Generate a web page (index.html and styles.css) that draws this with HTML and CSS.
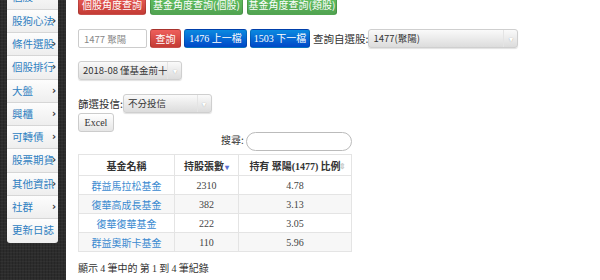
FILE: index.html
```html
<html>
<head>
<title>基金持股</title>
<link rel="stylesheet" href="styles.css">
</head>
<body>
<div class="page">
<div class="side">
<ul class="menu">
<li>個股<span class="arr">›</span></li>
<li>股狗心法<span class="arr">›</span></li>
<li>條件選股<span class="arr">›</span></li>
<li>個股排行<span class="arr">›</span></li>
<li>大盤<span class="arr">›</span></li>
<li>興櫃<span class="arr">›</span></li>
<li>可轉債<span class="arr">›</span></li>
<li>股票期貨<span class="arr">›</span></li>
<li>其他資訊<span class="arr">›</span></li>
<li>社群<span class="arr">›</span></li>
<li>更新日誌</li>
</ul>
</div>

<div class="main">
<div class="row tabs">
<a class="btn red w1">個股角度查詢</a>
<a class="btn green w2">基金角度查詢(個股)</a>
<a class="btn green w3">基金角度查詢(類股)</a>
</div>

<div class="row query">
<input class="stock" type="text" placeholder="1477 聚陽">
<a class="btn red w4">查詢</a>
<a class="btn blue w5 serif">1476 上一檔</a>
<a class="btn blue w6 serif">1503 下一檔</a>
<span class="lbl">查詢自選股:</span>
<div class="sel w7"><span class="val">1477(聚陽)</span><span class="drop">▾</span></div>
</div>

<div class="row month">
<div class="sel w8"><span class="val">2018-08 僅基金前十</span><span class="drop">▾</span></div>
</div>

<div class="row filter">
<span class="lbl">篩選投信:</span>
<div class="sel w9"><span class="val">不分投信</span><span class="drop">▾</span></div>
</div>
<div class="row"><a class="btn plain serif">Excel</a></div>

<div class="tablebox">
<div class="search">搜尋: <input type="text"></div>
<table class="funds">
<tr><th>基金名稱</th><th>持股張數<span class="sort down">▾</span></th><th>持有 聚陽<span class="serif">(1477)</span> 比例<span class="sort both">⇕</span></th></tr>
<tr><td class="name">群益馬拉松基金</td><td>2310</td><td>4.78</td></tr>
<tr class="odd"><td class="name">復華高成長基金</td><td>382</td><td>3.13</td></tr>
<tr><td class="name">復華復華基金</td><td>222</td><td>3.05</td></tr>
<tr class="odd"><td class="name">群益奧斯卡基金</td><td>110</td><td>5.96</td></tr>
</table>
<div class="info">顯示 <span class="serif">4</span> 筆中的 第 <span class="serif">1</span> 到 <span class="serif">4</span> 筆紀錄</div>
</div>
</div>
</div>
</body>
</html>
```

FILE: styles.css
```css
body{margin:0;
font-family:"Noto Sans CJK TC","Liberation Sans",sans-serif;
font-size:10px;
color:#333;
background:#fff;
overflow:hidden;}
.serif{font-family:"Liberation Serif","Noto Sans CJK TC",serif;}
.page{display:flex;height:280px;}

/* left menu */
.side{width:66px;flex:none;
background-color:#2c2c2c;
background-image:repeating-linear-gradient(0deg,rgba(255,255,255,0.03) 0 1px,transparent 1px 3px),
repeating-linear-gradient(90deg,rgba(0,0,0,0.15) 0 1px,transparent 1px 3px);}
.menu{list-style:none;margin:-13.6px 0 0 7px;padding:0;width:51px;
border-radius:0 0 3px 3px;overflow:hidden;}
.menu li{position:relative;height:23.3px;box-sizing:border-box;
line-height:22px;padding-left:5px;
font-size:10.5px;color:#2f7fc1;white-space:nowrap;
background:linear-gradient(#fdfdfd,#eeeeee);
border-bottom:1px solid #d6d6d6;}
.menu li:last-child{border-bottom:none;}
.arr{position:absolute;right:2px;top:0;color:#333;font-weight:bold;font-size:10px;
font-family:"DejaVu Sans",sans-serif;}

/* main area */
.main{padding-left:12px;margin-top:-6px;}
.row{display:flex;align-items:center;}
.btn{display:inline-block;box-sizing:border-box;height:21px;line-height:20px;
text-align:center;color:#fff;font-size:10px;border-radius:3px;
border:1px solid rgba(0,0,0,0.15);margin-right:4px;}
.red{background:linear-gradient(#ee5f5b,#c43c35);}
.green{background:linear-gradient(#62c462,#51a351);}
.blue{background:linear-gradient(#0a8ae0,#0048c8);}
.plain{background:linear-gradient(#fff,#e6e6e6);color:#333;border-color:#ccc;
height:19px;line-height:17px;width:36px;font-size:10px;}
.w1{width:68px;}
.w2{width:93px;}
.w3{width:90px;}
.w4{width:31px;height:19px;line-height:18px;margin-right:3px;}
.w5{width:63px;height:19px;line-height:18px;margin-right:3px;}
.w6{width:60px;height:19px;line-height:18px;margin-right:3px;}

.query{margin-top:14px;}
.stock{box-sizing:border-box;width:69px;height:19px;margin:0 3px 0 0;padding:0 5px;
border:1px solid #ccc;border-radius:2px;font-size:9.5px;font-family:inherit;}
.stock::placeholder{color:#888;}
.lbl{font-size:10.5px;color:#333;}

.sel{display:flex;box-sizing:border-box;height:19px;
border:1px solid #cfcfcf;border-radius:3px;
background:linear-gradient(#fafafa,#dcdcdc);
box-shadow:0 1px 1px rgba(0,0,0,0.12);}
.sel .val{flex:1;line-height:17px;padding-left:4px;font-size:9.5px;color:#333;white-space:nowrap;overflow:hidden;}
.sel .drop{width:13px;flex:none;text-align:center;line-height:17px;font-size:8px;color:#fff;
border-left:1px solid #e4e4e4;
text-shadow:0 0 1px #999;}
.w7{width:150px;}
.w8{width:104px;}
.w9{width:89px;}
.month{margin-top:13px;}
.filter{margin-top:14px;}

/* data table */
.tablebox{width:274px;}
.search{text-align:right;font-size:10px;color:#333;height:19px;}
.search input{box-sizing:border-box;width:106px;height:19px;margin:0;
border:1px solid #bbb;border-radius:10px;vertical-align:middle;}
.funds{width:274px;border-collapse:collapse;margin-top:3px;}
.funds th,.funds td{border:1px solid #e4e4e4;text-align:center;}
.funds th{height:21px;font-size:10px;font-weight:bold;color:#333;position:relative;}
.funds th:nth-child(1){width:93px;}
.funds th:nth-child(2){width:61px;}
.funds td{height:19px;font-family:"Liberation Serif",serif;font-size:10px;color:#444;}
.funds td.name{font-family:"Noto Sans CJK TC",sans-serif;color:#3a8ad0;}
.funds tr.odd td{background:#f7f7f7;}
.sort{font-size:8px;margin-left:1px;}
.down{color:#5a6fd0;}
.both{color:#ccc;position:absolute;right:5px;top:5px;}
.info{margin-top:8px;font-size:10px;color:#333;}
```
